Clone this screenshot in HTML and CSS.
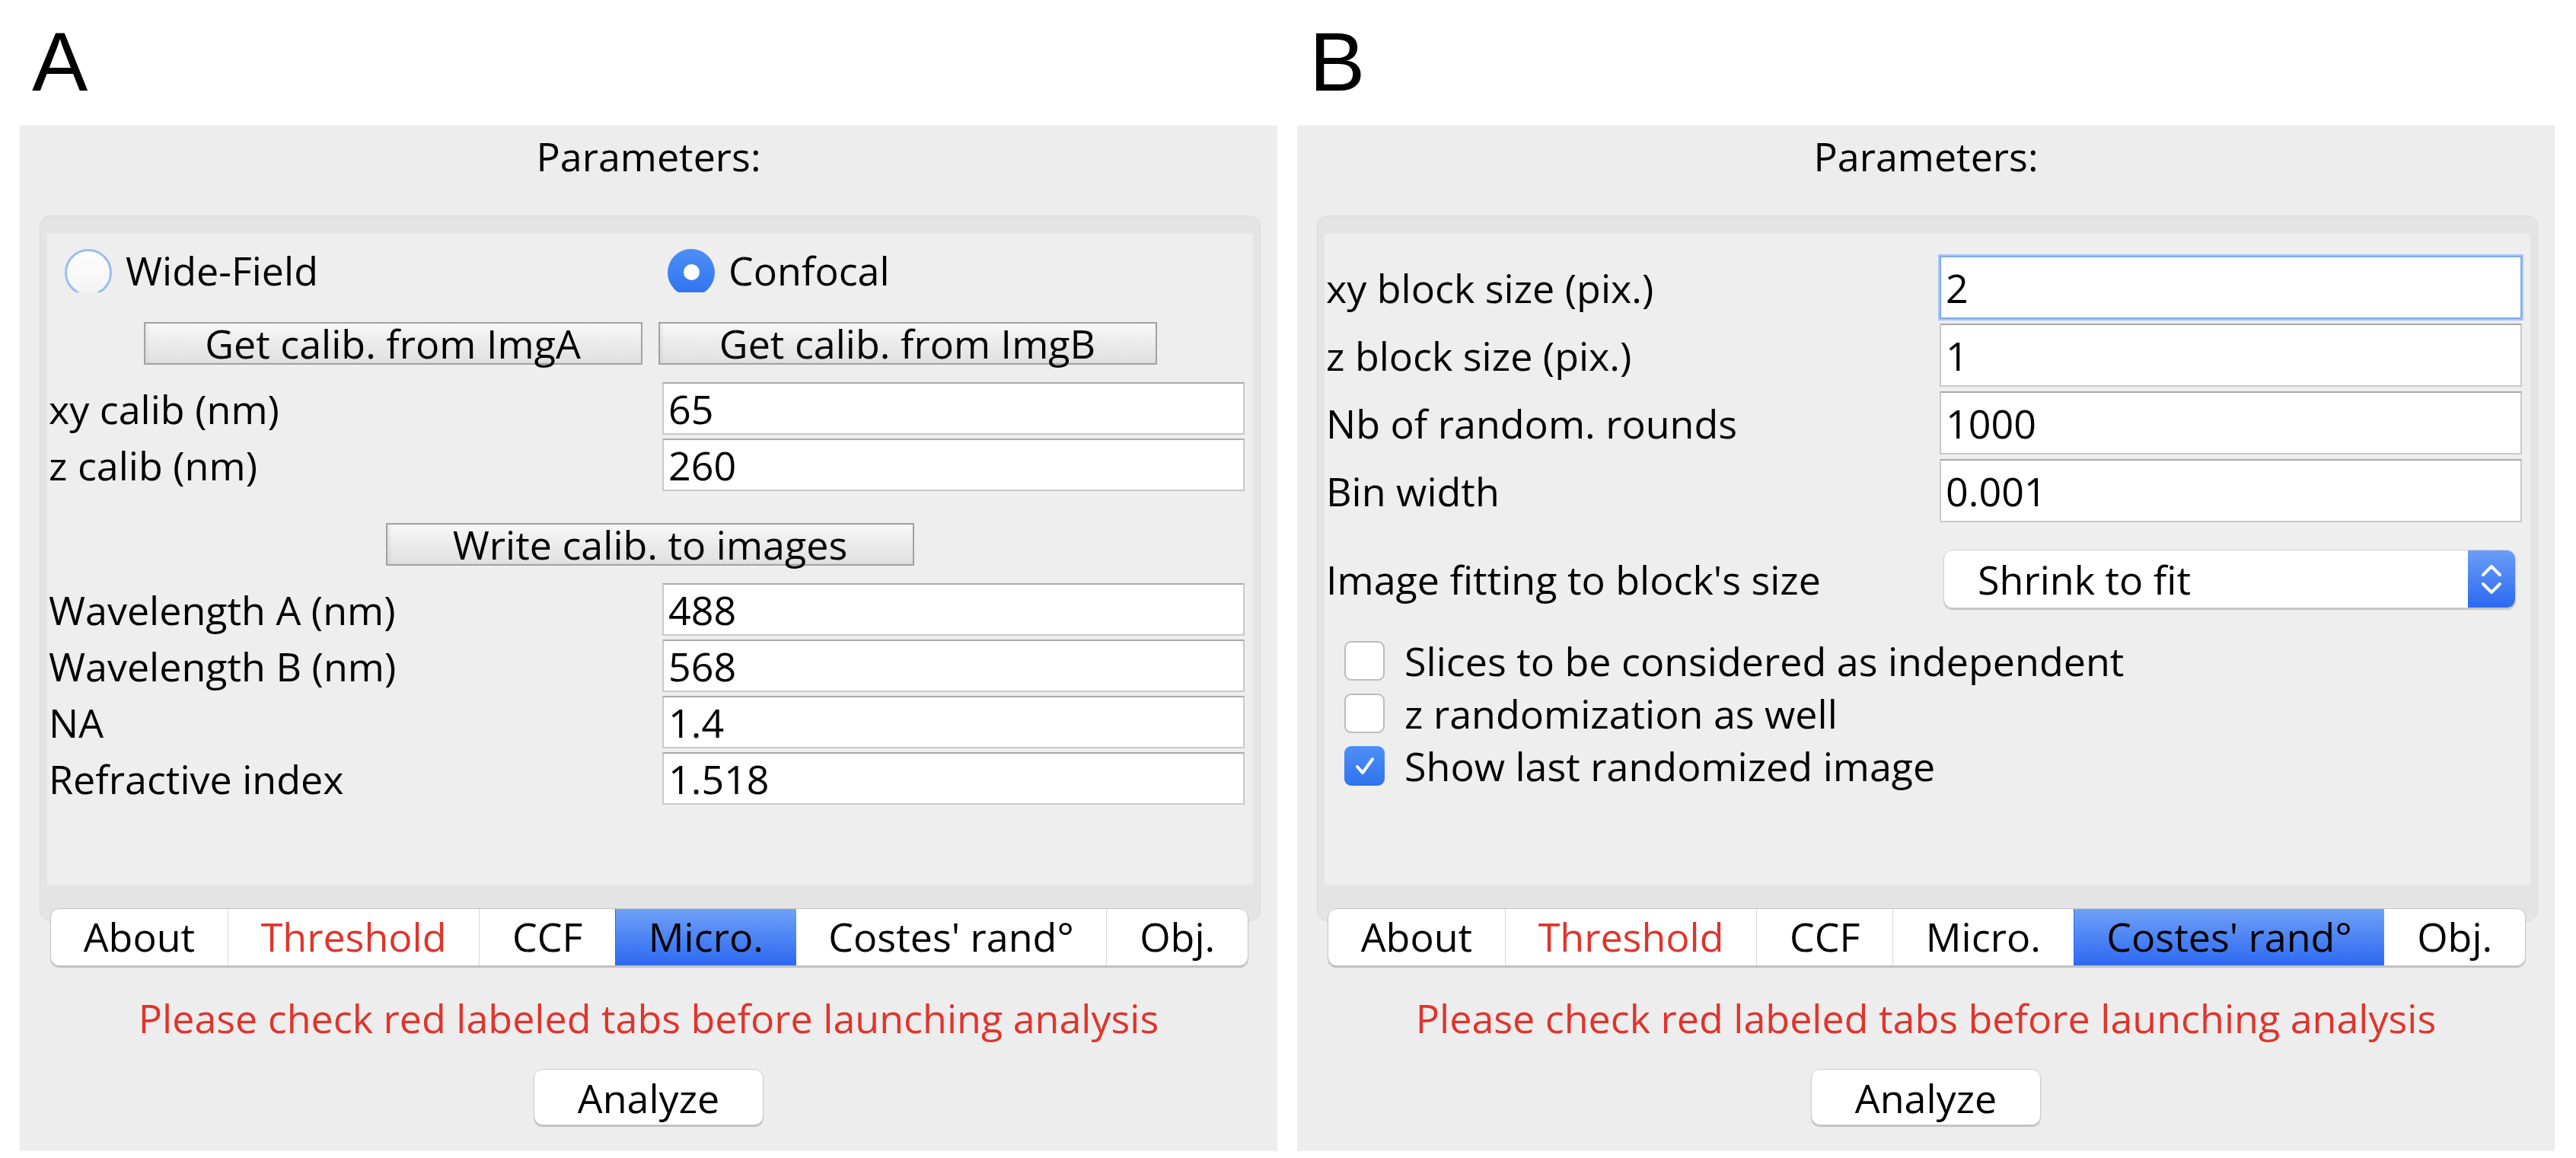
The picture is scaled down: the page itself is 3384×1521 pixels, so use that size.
FILE: index.html
```html
<!DOCTYPE html>
<html lang="en">
<head>
<meta charset="UTF-8">
<title>Parameters</title>
<link rel="stylesheet" href="styles.css">
</head>
<body>
<div class="figure">

    <!-- A : Micro. tab -->
    <section class="part">
        <div class="letter">A</div>
        <div class="window">
            <div class="title">Parameters:</div>
            <div class="tabbox">
                <div class="page page-micro">
                    <div class="radio-row">
                        <label class="radio"><span class="mark focus"></span>Wide-Field</label>
                        <label class="radio"><span class="mark on"></span>Confocal</label>
                    </div>
                    <div class="btn-row">
                        <button class="old-btn">Get calib. from ImgA</button>
                        <button class="old-btn">Get calib. from ImgB</button>
                    </div>
                    <div class="fields">
                        <span>xy calib (nm)</span><input class="field" type="text" value="65">
                        <span>z calib (nm)</span><input class="field" type="text" value="260">
                    </div>
                    <div class="btn-row write">
                        <button class="old-btn wide">Write calib. to images</button>
                    </div>
                    <div class="fields">
                        <span>Wavelength A (nm)</span><input class="field" type="text" value="488">
                        <span>Wavelength B (nm)</span><input class="field" type="text" value="568">
                        <span>NA</span><input class="field" type="text" value="1.4">
                        <span>Refractive index</span><input class="field" type="text" value="1.518">
                    </div>
                </div>
            </div>
            <div class="tabs">
                <div class="tab">About</div>
                <div class="tab red">Threshold</div>
                <div class="tab">CCF</div>
                <div class="tab selected">Micro.</div>
                <div class="tab">Costes' rand°</div>
                <div class="tab">Obj.</div>
            </div>
            <div class="warning">Please check red labeled tabs before launching analysis</div>
            <div class="actions"><button class="analyze">Analyze</button></div>
        </div>
    </section>

    <!-- B : Costes' randomization tab -->
    <section class="part">
        <div class="letter">B</div>
        <div class="window">
            <div class="title">Parameters:</div>
            <div class="tabbox">
                <div class="page page-costes">
                    <div class="fields tall">
                        <span>xy block size (pix.)</span><input class="field focused" type="text" value="2">
                        <span>z block size (pix.)</span><input class="field" type="text" value="1">
                        <span>Nb of random. rounds</span><input class="field" type="text" value="1000">
                        <span>Bin width</span><input class="field" type="text" value="0.001">
                    </div>
                    <div class="combo-row">
                        <span>Image fitting to block's size</span>
                        <div class="combo">
                            <span class="combo-text">Shrink to fit</span>
                            <span class="stepper">
                                <svg width="30" height="50" viewBox="0 0 30 50">
                                    <polyline points="4,19 15,8 26,19" fill="none" stroke="#fff" stroke-width="4" stroke-linecap="round" stroke-linejoin="round"/>
                                    <polyline points="4,31 15,42 26,31" fill="none" stroke="#fff" stroke-width="4" stroke-linecap="round" stroke-linejoin="round"/>
                                </svg>
                            </span>
                        </div>
                    </div>
                    <div class="checks">
                        <label class="check"><span class="box"></span>Slices to be considered as independent</label>
                        <label class="check"><span class="box"></span>z randomization as well</label>
                        <label class="check"><span class="box on">
                            <svg width="34" height="34" viewBox="0 0 34 34">
                                <polyline points="7,18 14,26 27,8" fill="none" stroke="#fff" stroke-width="4" stroke-linecap="round" stroke-linejoin="round"/>
                            </svg>
                        </span>Show last randomized image</label>
                    </div>
                </div>
            </div>
            <div class="tabs">
                <div class="tab">About</div>
                <div class="tab red">Threshold</div>
                <div class="tab">CCF</div>
                <div class="tab">Micro.</div>
                <div class="tab selected">Costes' rand°</div>
                <div class="tab">Obj.</div>
            </div>
            <div class="warning">Please check red labeled tabs before launching analysis</div>
            <div class="actions"><button class="analyze">Analyze</button></div>
        </div>
    </section>

</div>
</body>
</html>
```

FILE: styles.css
```css
body {
    margin: 0;
    background: #fff;
    font-family: "Open Sans", "Noto Sans", sans-serif;
    font-size: 52px;
    color: #000;
}
.figure {
    display: flex;
    gap: 26px;
    padding: 0 26px;
}
.part {
    width: 1652px;
    flex: none;
}
.letter {
    font-family: "Liberation Sans", Arial, sans-serif;
    font-size: 110px;
    line-height: 110px;
    height: 110px;
    padding: 26px 0 0 16px;
}
.window {
    margin-top: 29px;
    background-color: #ededed;
    padding: 10px 0 34px;
}
.title {
    text-align: center;
    line-height: 60px;
}
.tabbox {
    margin: 48px 22px 0 26px;
    padding: 23px 9px 47px;
    background-color: #e4e4e4;
    border: 1px solid #dadada;
    border-radius: 14px;
}
.page {
    height: 855px;
    background-color: #eeeeee;
    box-sizing: border-box;
}
.page-micro {
    padding-top: 16px;
}
.page-costes {
    padding-top: 29px;
}

/* radio buttons */
.radio-row {
    display: grid;
    grid-template-columns: 1fr 1fr;
    height: 64px;
    align-items: center;
}
.radio {
    display: flex;
    align-items: center;
    gap: 17px;
    padding-left: 22px;
    line-height: 60px;
}
.mark {
    width: 64px;
    height: 57px;
    overflow: hidden;
    flex: none;
    position: relative;
}
.mark::before {
    content: "";
    display: block;
    width: 62px;
    height: 62px;
    margin-left: 1px;
    box-sizing: border-box;
    border-radius: 50%;
    background: #fff;
    border: 2px solid #c4c4c4;
}
.mark.focus::before {
    border: 3px solid #99bdf1;
    background: linear-gradient(#fdfdfd, #f4f4f4);
}
.mark.on::before {
    border: none;
    background: linear-gradient(#4d8ff6, #2f73ee);
}
.mark.on::after {
    content: "";
    position: absolute;
    left: 22px;
    top: 20px;
    width: 21px;
    height: 21px;
    border-radius: 50%;
    background: #fff;
}

/* old style square buttons */
.btn-row {
    display: flex;
    justify-content: center;
    gap: 21px;
    margin-top: 36px;
}
.btn-row.write {
    margin-top: 42px;
}
.old-btn {
    width: 655px;
    height: 56px;
    padding: 0;
    font: inherit;
    line-height: 50px;
    color: #000;
    border: 2px solid #a2a2a2;
    border-radius: 0;
    background: linear-gradient(#f8f8f8, #ececec 45%, #e0e0e0);
    box-shadow: inset 3px 0 4px rgba(0, 0, 0, 0.06);
}
.old-btn.wide {
    width: 694px;
}

/* label + text field grids */
.fields {
    display: grid;
    grid-template-columns: 808px 1fr;
    grid-auto-rows: 69px;
    row-gap: 5px;
    align-items: center;
    margin-top: 23px;
    padding-right: 11px;
}
.fields span {
    padding-left: 2px;
}
.field {
    height: 69px;
    box-sizing: border-box;
    width: 100%;
    margin: 0;
    padding: 0 6px;
    font: inherit;
    color: #000;
    background: #fff;
    border: 2px solid #c9c9c9;
    border-top-color: #a9a9a9;
    border-radius: 0;
    outline: none;
}
.fields.tall {
    margin-top: 0;
    grid-auto-rows: 83px;
    row-gap: 6px;
}
.fields.tall .field {
    height: 83px;
}
.field.focused {
    border-color: #7eaaeb;
    box-shadow: 0 0 0 2px #a9c7f3;
}

/* combo box */
.combo-row {
    display: grid;
    grid-template-columns: 813px 1fr;
    align-items: center;
    margin-top: 36px;
    padding-right: 19px;
}
.combo-row > span {
    padding-left: 2px;
}
.combo {
    height: 77px;
    display: flex;
    align-items: center;
    background: #fff;
    border: 1px solid #d0d0d0;
    border-radius: 12px;
    box-shadow: 0 2px 1px rgba(0, 0, 0, 0.18);
    overflow: hidden;
    box-sizing: border-box;
}
.combo-text {
    flex: 1;
    padding-left: 44px;
}
.stepper {
    width: 62px;
    height: 100%;
    display: flex;
    align-items: center;
    justify-content: center;
    background: linear-gradient(#6b9df7, #2c69f1);
}

/* checkboxes */
.checks {
    margin-top: 34px;
}
.check {
    display: flex;
    align-items: center;
    height: 69px;
    gap: 26px;
    padding-left: 26px;
}
.box {
    width: 53px;
    height: 52px;
    flex: none;
    box-sizing: border-box;
    background: #fff;
    border: 2px solid #bcbcbc;
    border-radius: 9px;
    display: flex;
    align-items: center;
    justify-content: center;
}
.box.on {
    border: none;
    background: linear-gradient(#4d8ff6, #2f73ee);
}

/* tab strip */
.tabs {
    display: flex;
    margin: -17px 38px 0 40px;
    height: 76px;
    box-sizing: border-box;
    background: #fff;
    border: 1px solid #c6c6c6;
    border-radius: 12px;
    box-shadow: 0 2px 1px rgba(0, 0, 0, 0.2);
    overflow: hidden;
    position: relative;
}
.tab {
    flex: 1 1 auto;
    text-align: center;
    padding: 0 40px;
    line-height: 72px;
    border-left: 1px solid #d8d8d8;
}
.tab:first-child {
    border-left: none;
}
.tab.red {
    color: #e0342c;
}
.tab.selected {
    background: linear-gradient(#6fa0f7, #2c69f1);
    border-left-color: #2c69f1;
}
.tab.selected + .tab {
    border-left: none;
}

.warning {
    margin-top: 38px;
    text-align: center;
    line-height: 60px;
    color: #e0342c;
}
.actions {
    margin-top: 37px;
    text-align: center;
}
.analyze {
    width: 302px;
    height: 74px;
    padding: 0;
    font: inherit;
    color: #000;
    background: #fff;
    border: 1px solid #cdcdcd;
    border-radius: 12px;
    box-shadow: 0 2px 1px rgba(0, 0, 0, 0.2);
}
```
